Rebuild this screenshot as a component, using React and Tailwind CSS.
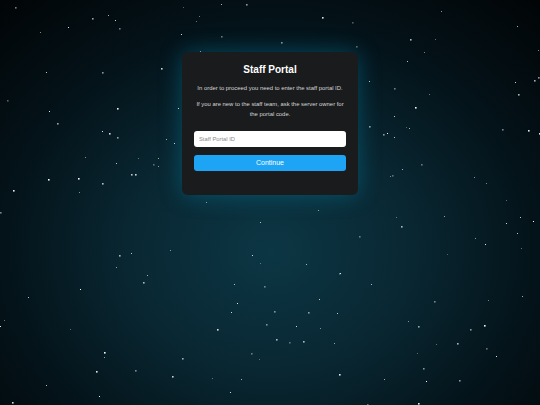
import React from "react";

// seeded random so the star field stays the same every render
function rng(seed) {
  let s = seed;
  return () => {
    s = (s * 16807) % 2147483647;
    return (s - 1) / 2147483646;
  };
}

const rand = rng(42);
const stars = Array.from({ length: 180 }, () => ({
  x: Math.round(rand() * 540),
  y: Math.round(rand() * 405),
  size: rand() < 0.6 ? 1 : 1.6,
  o: 0.3 + rand() * 0.7,
}));

const Stars = () => (
  <svg className="absolute inset-0" width="540" height="405" viewBox="0 0 540 405">
    {stars.map((s, i) => (
      <rect key={i} x={s.x} y={s.y} width={s.size} height={s.size} fill="#ffffff" opacity={s.o} />
    ))}
  </svg>
);

const App = () => {
  return (
    <div className="relative w-full h-[405px] overflow-hidden bg-[radial-gradient(ellipse_75%_85%_at_50%_62%,#0c3644_0%,#092732_35%,#04131a_65%,#010405_100%)] font-['Liberation_Sans',Arial,sans-serif]">
      <Stars />

      <div className="relative flex justify-center pt-[52px]">
        <div className="w-[176px] h-[143px] rounded-[6px] bg-[#1a1b1d] px-3 pt-3 shadow-[0_0_22px_rgba(0,160,205,0.35)]">
          <h1 className="text-white text-[10px] leading-[12px] font-bold text-center">Staff Portal</h1>

          <p className="mt-[7px] text-[#d6d6d6] text-[5.9px] leading-[10px] text-center">
            In order to proceed you need to enter the staff portal ID.
          </p>
          <p className="mt-[6px] text-[#d6d6d6] text-[5.9px] leading-[10px] text-center">
            If you are new to the staff team, ask the server owner for the portal code.
          </p>

          <input
            className="mt-[12px] w-full h-[16px] rounded-[3px] bg-white px-[5px] text-[5.8px] text-black placeholder:text-[#8c8c8c] outline-none"
            placeholder="Staff Portal ID"
          />

          <button className="mt-[7px] w-full h-[16px] rounded-[3px] bg-[#1ea4f4] text-white text-[7px] flex items-center justify-center">
            Continue
          </button>
        </div>
      </div>
    </div>
  );
};

export default App;
